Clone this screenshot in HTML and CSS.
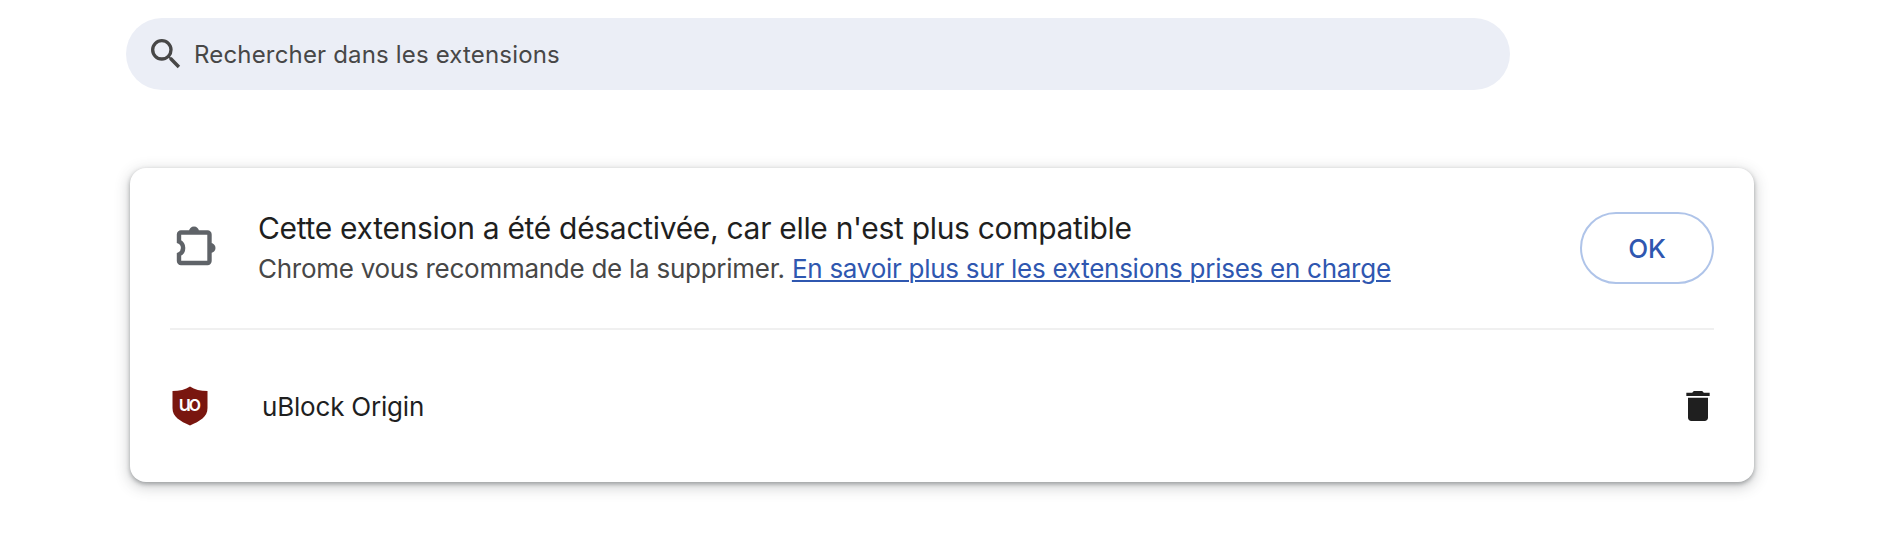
FILE: index.html
```
<!DOCTYPE html>
<html lang="fr">

<head>
    <meta charset="UTF-8">
    <meta name="viewport" content="width=device-width, initial-scale=1.0">
    <title>Extensions</title>
    <link rel="stylesheet" href="styles.css">
</head>

<body>
    <div class="search">
        <svg class="search-icon" viewBox="0 0 24 24">
            <path d="M15.5 14h-.79l-.28-.27A6.47 6.47 0 0 0 16 9.5 6.5 6.5 0 1 0 9.5 16c1.61 0 3.09-.59 4.23-1.57l.27.28v.79l5 4.99L20.49 19l-4.99-5zm-6 0a4.5 4.5 0 1 1 0-9 4.5 4.5 0 0 1 0 9z"/>
        </svg>
        <span class="search-label">Rechercher dans les extensions</span>
    </div>

    <div class="card">
        <div class="card-header">
            <svg class="puzzle-icon" viewBox="0 0 40 40">
                <path class="puzzle-body" d="M5 6.5H31.5A2 2 0 0 1 33.5 8.5V35A2 2 0 0 1 31.5 37H5A2 2 0 0 1 3 35V28.5A7.2 7.2 0 0 0 3 15.5V8.5A2 2 0 0 1 5 6.5Z"/>
                <path class="puzzle-knob" d="M13 5.5a5 5 0 0 1 10 0zM34.500 17a5 5 0 0 1 0 10z"/>
            </svg>
            <div class="message">
                <h1 class="title">Cette extension a été désactivée, car elle n'est plus compatible</h1>
                <p class="subtitle"><span>Chrome vous recommande de la supprimer.</span> <a class="link" href="#">En savoir plus sur les extensions prises en charge</a></p>
            </div>
            <button class="ok-button">OK</button>
        </div>
        <div class="extension">
            <svg class="shield-icon" viewBox="0 0 36 40">
                <path class="shield" d="M18 .5C13.500 3.500 7.500 5 .5 5V22C.5 31 8 35 18 39.500C28 35 35.500 31 35.500 22V5C28.500 5 22.500 3.500 18 .5Z"/>
                <text class="shield-text" x="6.500" y="24.500">uo</text>
            </svg>
            <span class="extension-name">uBlock Origin</span>
            <svg class="trash-icon" viewBox="0 0 24 24">
                <path d="M6 19c0 1.100.9 2 2 2h8c1.100 0 2-.9 2-2V7H6v12zM19 4h-3.500l-1-1h-5l-1 1H5v2h14V4z"/>
            </svg>
        </div>
    </div>
</body>

</html>
```

FILE: styles.css
```
body {
    margin: 0;
    padding: 18px 142px 40px 126px;
    font-family: Inter, Arial, sans-serif;
    background-color: #fff;
    color: #1f1f1f;
}

.search {
    display: flex;
    align-items: center;
    box-sizing: border-box;
    width: 1384px;
    height: 72px;
    padding-left: 20px;
    border-radius: 36px;
    background-color: #ebeef6;
    color: #474747;
}

.search-icon {
    width: 40px;
    height: 40px;
    fill: #474747;
}

.search-label {
    margin-left: 8px;
    font-size: 24px;
    letter-spacing: 0.17px;
}

.card {
    box-sizing: border-box;
    height: 314px;
    margin: 78px 0 0 4px;
    padding: 0 40px;
    border-radius: 16px;
    background-color: #fff;
    box-shadow: 0 2px 4px rgba(60, 64, 67, 0.4), 0 4px 14px 2px rgba(60, 64, 67, 0.22);
}

.card-header {
    display: flex;
    align-items: center;
    box-sizing: border-box;
    height: 162px;
    border-bottom: 2px solid #f0f0f0;
}

.puzzle-icon {
    width: 40px;
    height: 40px;
    margin: -4px 0 0 6px;
}

.puzzle-body {
    fill: none;
    stroke: #5f6368;
    stroke-width: 4.4;
}

.puzzle-knob {
    fill: #5f6368;
}

.message {
    margin-left: 42px;
    white-space: nowrap;
}

.title {
    margin: 0;
    font-size: 30px;
    font-weight: 400;
    letter-spacing: -0.31px;
    line-height: 40px;
}

.subtitle {
    margin: 1px 0 -1px;
    color: #474747;
    font-size: 26px;
    letter-spacing: -0.265px;
    line-height: 40px;
}

.link {
    color: #2f57b0;
    text-decoration-thickness: 2px;
    text-underline-offset: 2px;
}

.ok-button {
    width: 134px;
    height: 72px;
    margin-left: auto;
    border: 2px solid #afc4e9;
    border-radius: 36px;
    background-color: #fff;
    color: #2f57b0;
    font-family: inherit;
    font-size: 26px;
    font-weight: 500;
    letter-spacing: -0.2px;
}

.extension {
    display: flex;
    align-items: center;
    height: 152px;
}

.shield-icon {
    width: 36px;
    height: 40px;
    margin-left: 2px;
}

.shield {
    fill: #79160f;
}

.shield-text {
    fill: #fff;
    font-size: 21px;
    font-weight: 500;
    letter-spacing: -2.6px;
}

.extension-name {
    margin-left: 54px;
    font-size: 26px;
    letter-spacing: -0.2px;
}

.trash-icon {
    width: 40px;
    height: 40px;
    margin: 0 -4px 0 auto;
    fill: #1f1f1f;
}
```
